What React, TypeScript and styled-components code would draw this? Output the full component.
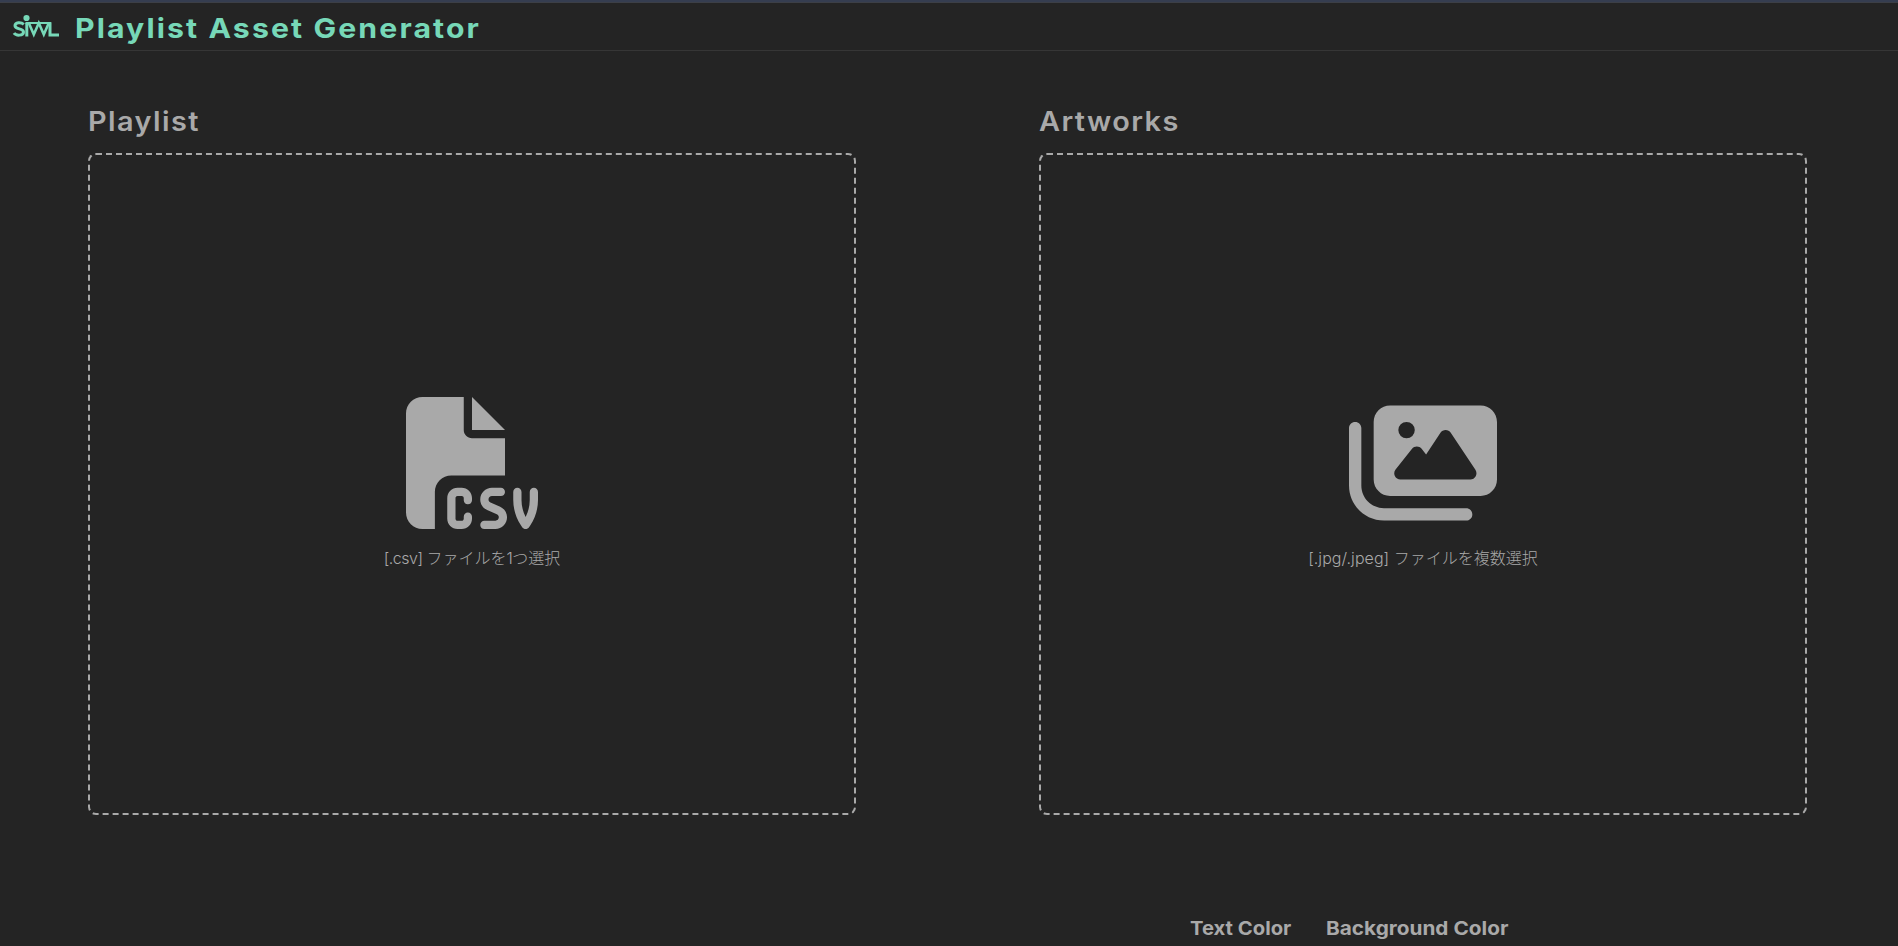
import React from 'react';
import styled, { createGlobalStyle } from 'styled-components';
import { FaFileCsv, FaImages } from 'react-icons/fa6';

const GlobalStyle = createGlobalStyle`
  *, *::before, *::after { box-sizing: border-box; }
  body {
    margin: 0;
    height: 946px;
    overflow: hidden;
    background: #242424;
    color: #a9a9a9;
    font-family: Inter, "Noto Sans CJK JP", sans-serif;
  }
`;

const Header = styled.header`
  display: flex;
  align-items: center;
  height: 51px;
  padding: 3px 0 0 13px;
  border-top: 2px solid #353d50;
  border-bottom: 1px solid #363636;
  box-shadow: inset 0 1px 0 #3c3f46;
  color: #77d8b8;
`;

const Logo = styled.svg`
  display: block;
  width: 46px;
  height: 24px;
  margin: 0 16px 1px 0;
  overflow: visible;
`;

const Title = styled.h1`
  margin: 1px 0 0;
  font-size: 27.5px;
  line-height: 34px;
  font-weight: 700;
  letter-spacing: 1.9px;
  white-space: nowrap;
  transform: scaleX(1.1);
  transform-origin: left;
`;

const Panels = styled.main`
  display: grid;
  grid-template-columns: 768px 768px;
  column-gap: 183px;
  padding: 51px 91px 0 88px;
`;

const Heading = styled.h2`
  margin: 0 0 14px;
  height: 37px;
  font-size: 26.5px;
  line-height: 38px;
  font-weight: 600;
  letter-spacing: 1.3px;
  white-space: nowrap;
  transform: scaleX(1.09);
  transform-origin: left;
`;

const DropZone = styled.div`
  display: flex;
  flex-direction: column;
  align-items: center;
  height: 662px;
  padding-top: 242px;
  border: 2px dashed #a9a9a9;
  border-radius: 8px;
`;

const UploadIcon = styled.div<{ $width: number }>`
  svg {
    display: block;
    height: 132px;
    width: ${(p) => p.$width}px;
  }
`;

const Hint = styled.p<{ $spacing: number }>`
  margin: 17px 0 0;
  font-size: 16px;
  line-height: 24px;
  font-weight: 300;
  white-space: nowrap;

  span { letter-spacing: ${(p) => p.$spacing}px; }
`;

const ColorLabels = styled.footer`
  display: flex;
  padding: 101px 0 0 1190px;
`;

const ColorLabel = styled.label<{ $width: number; $stretch: number }>`
  flex: none;
  width: ${(p) => p.$width}px;
  font-size: 19px;
  line-height: 25px;
  font-weight: 700;
  white-space: nowrap;
  transform: scaleX(${(p) => p.$stretch});
  transform-origin: left;
`;

function BrandMark() {
  return (
    <Logo viewBox="0 0 46 24" fill="none" stroke="currentColor" strokeWidth="3">
      <path d="M10.8 9.3C8 7 2 7.2 2 10.8C2 15 10.5 12.8 10.5 17C10.5 21 3 21 1 18" />
      <path d="M13.8 8V21.5" />
      <circle cx="13.5" cy="3" r="3.1" fill="currentColor" stroke="none" />
      <path d="M12.5 8H38" strokeWidth="2" />
      <path d="M15.8 8L20.8 19.5L25.8 8L30.8 19.5L35.8 8" strokeWidth="2.6" />
      <path d="M37 7.3V20H46" />
    </Logo>
  );
}

export default function App() {
  return (
    <>
      <GlobalStyle />
      <Header>
        <BrandMark />
        <Title>Playlist Asset Generator</Title>
      </Header>
      <Panels>
        <section>
          <Heading>Playlist</Heading>
          <DropZone>
            <UploadIcon $width={132}><FaFileCsv /></UploadIcon>
            <Hint $spacing={-0.5}><span>[.csv] </span>ファイルを<span>1</span>つ選択</Hint>
          </DropZone>
        </section>
        <section>
          <Heading>Artworks</Heading>
          <DropZone>
            <UploadIcon $width={148}><FaImages /></UploadIcon>
            <Hint $spacing={0.05}><span>[.jpg/.jpeg] </span>ファイルを複数選択</Hint>
          </DropZone>
        </section>
      </Panels>
      <ColorLabels>
        <ColorLabel $width={136} $stretch={1.065}>Text Color</ColorLabel>
        <ColorLabel $width={200} $stretch={1.094}>Background Color</ColorLabel>
      </ColorLabels>
    </>
  );
}
